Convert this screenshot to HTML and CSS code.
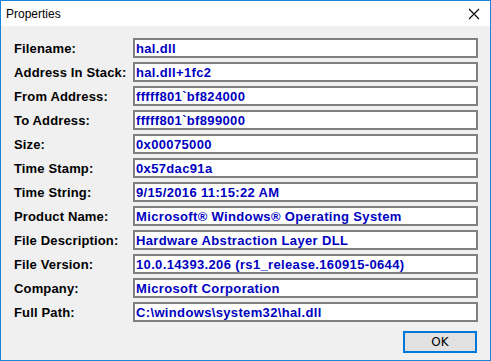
FILE: index.html
```html
<!DOCTYPE html>
<html>
<head>
<meta charset="utf-8">
<link rel="stylesheet" href="styles.css">
</head>
<body>
<div class="window">
  <div class="titlebar">
    <span class="title">Properties</span>
    <svg class="close" width="12" height="12" viewBox="0 0 12 12"><path d="M1 1 L11 11 M11 1 L1 11" stroke="#000" stroke-width="1.1" fill="none"/></svg>
  </div>
  <div class="client">
    <div class="grid">
      <div class="label">Filename:</div><div class="value">hal.dll</div>
      <div class="label">Address In Stack:</div><div class="value">hal.dll+1fc2</div>
      <div class="label">From Address:</div><div class="value">fffff801`bf824000</div>
      <div class="label">To Address:</div><div class="value">fffff801`bf899000</div>
      <div class="label">Size:</div><div class="value">0x00075000</div>
      <div class="label">Time Stamp:</div><div class="value">0x57dac91a</div>
      <div class="label">Time String:</div><div class="value">9/15/2016 11:15:22 AM</div>
      <div class="label">Product Name:</div><div class="value">Microsoft® Windows® Operating System</div>
      <div class="label">File Description:</div><div class="value">Hardware Abstraction Layer DLL</div>
      <div class="label">File Version:</div><div class="value">10.0.14393.206 (rs1_release.160915-0644)</div>
      <div class="label">Company:</div><div class="value">Microsoft Corporation</div>
      <div class="label">Full Path:</div><div class="value">C:\windows\system32\hal.dll</div>
    </div>
    <div class="buttons">
      <button class="ok">OK</button>
    </div>
  </div>
</div>
</body>
</html>
```
FILE: styles.css
```css
html, body {
  margin: 0;
  padding: 0;
  width: 491px;
  height: 361px;
  overflow: hidden;
}
.window {
  box-sizing: border-box;
  width: 491px;
  height: 361px;
  border: 1px solid #1883d7;
  background: #f0f0f0;
  display: flex;
  flex-direction: column;
}
.titlebar {
  height: 25px;
  background: #fff;
  display: flex;
  align-items: center;
  justify-content: space-between;
  padding: 0 10px 0 5px;
  flex: none;
}
.title {
  font-family: "Liberation Sans", Arial, sans-serif;
  font-size: 12px;
  color: #000;
}
.close {
  display: block;
}
.client {
  flex: 1;
  padding: 12px 12px 7px 12px;
  display: flex;
  flex-direction: column;
}
.grid {
  display: grid;
  grid-template-columns: 120px 345px;
  grid-auto-rows: 20px;
  row-gap: 4px;
}
.label {
  font-family: "Liberation Sans", Arial, sans-serif;
  font-weight: bold;
  font-size: 13px;
  letter-spacing: 0.15px;
  color: #000;
  display: flex;
  align-items: center;
  padding-left: 1px;
  padding-top: 1px;
}
.value {
  box-sizing: border-box;
  border: 2px solid #7f7f7f;
  background: #fff;
  font-family: "Liberation Sans", Arial, sans-serif;
  font-weight: bold;
  font-size: 13px;
  letter-spacing: 0.35px;
  color: #0000c0;
  display: flex;
  align-items: center;
  padding-left: 1px;
  padding-top: 1px;
  white-space: nowrap;
  overflow: hidden;
}
.buttons {
  margin-top: auto;
  display: flex;
  justify-content: flex-end;
  padding-right: 1px;
}
.ok {
  box-sizing: border-box;
  width: 74px;
  height: 22px;
  border: 2px solid #0078d7;
  background: #e1e1e1;
  font-family: "DejaVu Sans", sans-serif;
  font-size: 12px;
  color: #000;
  padding: 0;
}
```
